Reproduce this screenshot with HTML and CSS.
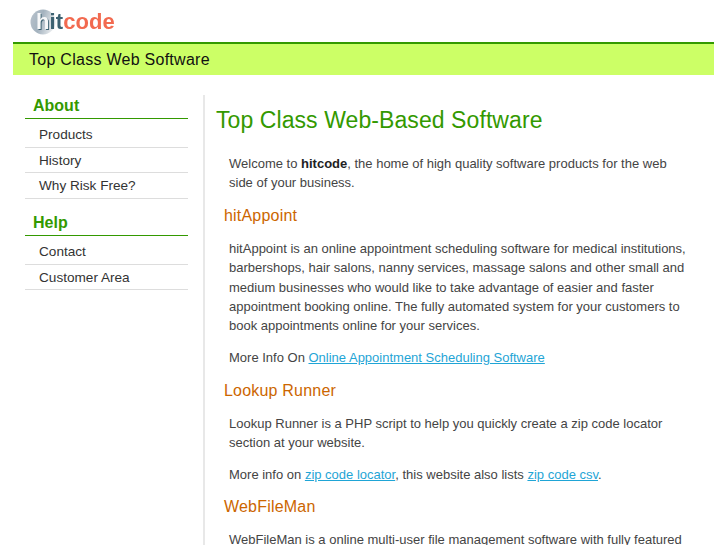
FILE: index.html
```html
<!DOCTYPE html>
<html lang="en">
<head>
<meta charset="utf-8">
<title>hitcode</title>
<link rel="stylesheet" href="styles.css">
</head>
<body>
<div class="page">
  <header class="logo">
    <svg class="logo-mark" width="30" height="30" viewBox="0 0 30 30" aria-hidden="true">
      <defs>
        <linearGradient id="orb" x1="0" y1="0" x2="1" y2="0.3">
          <stop offset="0" stop-color="#b9c3cd"/>
          <stop offset="0.5" stop-color="#a3b2be"/>
          <stop offset="1" stop-color="#e6e9ec"/>
        </linearGradient>
      </defs>
      <circle cx="13" cy="14" r="12.5" fill="url(#orb)"/>
    </svg>
    <span class="logo-text"><span class="logo-h">h</span><span class="logo-it">it</span><span class="logo-code">code</span></span>
  </header>
  <div class="banner">Top Class Web Software</div>
  <div class="columns">
    <nav class="sidebar">
      <h2>About</h2>
      <ul>
        <li>Products</li>
        <li>History</li>
        <li>Why Risk Free?</li>
      </ul>
      <h2>Help</h2>
      <ul>
        <li>Contact</li>
        <li>Customer Area</li>
      </ul>
    </nav>
    <main class="content">
      <h1>Top Class Web-Based Software</h1>
      <p>Welcome to <strong>hitcode</strong>, the home of high quality software products for the web side of your business.</p>
      <h3>hitAppoint</h3>
      <p>hitAppoint is an online appointment scheduling software for medical institutions, barbershops, hair salons, nanny services, massage salons and other small and medium businesses who would like to take advantage of easier and faster appointment booking online. The fully automated system for your customers to book appointments online for your services.</p>
      <p>More Info On <a href="#">Online Appointment Scheduling Software</a></p>
      <h3>Lookup Runner</h3>
      <p>Lookup Runner is a PHP script to help you quickly create a zip code locator section at your website.</p>
      <p>More info on <a href="#">zip code locator</a>, this website also lists <a href="#">zip code csv</a>.</p>
      <h3>WebFileMan</h3>
      <p>WebFileMan is a online multi-user file management software with fully featured</p>
    </main>
  </div>
</div>
</body>
</html>
```
FILE: styles.css
```css
html, body {
  margin: 0;
  height: 545px;
  overflow: hidden;
  background: #fff;
}
body {
  font-family: "Liberation Sans", Arial, sans-serif;
}
.page {
  margin: 0 13px;
  width: 701px;
}
.logo {
  height: 42px;
  display: flex;
  align-items: center;
  padding-left: 17px;
  box-sizing: border-box;
  filter: blur(0.35px);
}
.logo-mark {
  flex: none;
  margin-right: -24px;
  margin-top: 3px;
}
.logo-text {
  font-size: 22px;
  font-weight: bold;
  letter-spacing: 0.1px;
  position: relative;
  margin-top: 2px;
}
.logo-h {
  color: #f7f8f9;
  text-shadow: 1px 1px 0 #3d6272;
}
.logo-it { color: #3d6272; }
.logo-code { color: #f26a50; }
.banner {
  height: 31px;
  line-height: 31px;
  border-top: 2px solid #339900;
  background: #ccff66;
  padding-left: 16px;
  font-size: 16px;
  letter-spacing: 0.27px;
  color: #111;
}
.columns {
  display: flex;
  margin-top: 20px;
}
.sidebar {
  width: 163px;
  margin-left: 12px;
  margin-right: 15px;
  flex: none;
}
.sidebar h2 {
  margin: 0;
  height: 24px;
  line-height: 21px;
  box-sizing: border-box;
  padding-left: 8px;
  font-size: 16px;
  font-weight: bold;
  color: #339900;
  border-bottom: 1px solid #339900;
}
.sidebar ul {
  list-style: none;
  margin: 0 0 13.5px;
  padding: 3px 0 0;
}
.sidebar li {
  height: 25.6px;
  line-height: 25px;
  box-sizing: border-box;
  padding-left: 14px;
  font-size: 13.6px;
  color: #333;
  border-bottom: 1px solid #dddddd;
}
.content {
  flex: 1;
  border-left: 2px solid #e8e8e8;
  padding-left: 11px;
  padding-right: 20px;
  height: 460px;
}
.content h1 {
  margin: 10px 0 18.5px;
  font-size: 23px;
  letter-spacing: 0.08px;
  line-height: 30px;
  font-weight: normal;
  color: #339900;
}
.content h3 {
  margin: 13.5px 0 13px;
  padding-left: 8px;
  font-size: 16px;
  letter-spacing: 0.2px;
  line-height: 20px;
  font-weight: normal;
  color: #cc6600;
}
.content p {
  margin: 0 0 12px;
  padding-left: 13px;
  font-size: 13px;
  line-height: 19.4px;
  color: #444;
}
.content strong { color: #222; }
.content a { color: #1fa5d6; }
```
